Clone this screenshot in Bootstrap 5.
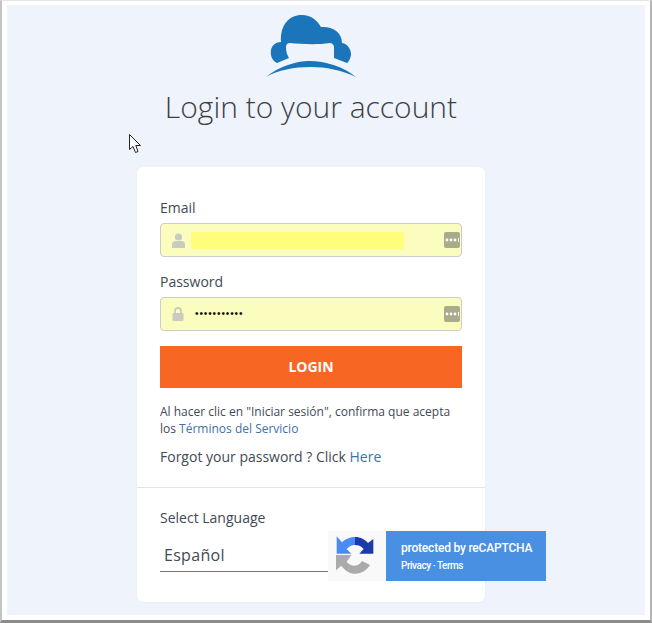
<!DOCTYPE html>
<html lang="es">
<head>
    <meta charset="UTF-8">
    <meta name="viewport" content="width=device-width, initial-scale=1.0">
    <title>Login to your account</title>
    <link href="https://cdn.jsdelivr.net/npm/bootstrap@5.3.0/dist/css/bootstrap.min.css" rel="stylesheet">
    <style>
        html, body {
            height: 100%;
            overflow: hidden;
        }

        body {
            background-color: #fff;
            font-family: "Open Sans", sans-serif;
            color: #3f4a54;
        }

        .shot-frame {
            width: 652px;
            height: 623px;
            border-style: solid;
            border-width: 1px 2px 3px 2px;
            border-color: #e6e6e6 #b4b4b4 #8c8c8c #c4c4c4;
            position: relative;
        }

        .shot-inner {
            height: 100%;
            padding: 4px 5px 5px 5px;
            background-color: #fff;
        }

        .page-area {
            height: 100%;
            background-color: #eff3fb;
            padding-top: 10px;
        }

        .login-col {
            width: 348px;
            margin-left: 130px;
        }

        .logo-wrap {
            height: 72px;
        }

        .login-title {
            font-size: 30px;
            font-weight: 300;
            line-height: 40px;
            color: #3c3f45;
            margin: 0 0 40px;
        }

        .login-box {
            height: 435px;
            border-radius: 6px;
            box-shadow: 0 0 2px rgba(0, 0, 0, .06);
        }

        .box-top {
            padding: 31px 23px 0;
        }

        .field-label {
            font-size: 14px;
            line-height: 20px;
            margin-bottom: 5px;
        }

        .field-shell {
            height: 34px;
            background-color: #fafdbd;
            border: 1px solid #cccccc;
            border-radius: 4px;
            margin-bottom: 15px;
            padding: 0 1px 0 11px;
        }

        .autofill-bar {
            width: 213px;
            height: 17px;
            margin-left: 6px;
            background-color: #fefe7c;
            border-radius: 2px;
        }

        .pw-dots {
            font-family: "Liberation Sans", sans-serif;
            font-size: 10px;
            letter-spacing: .9px;
            color: #111;
            line-height: 1;
            margin-left: 11px;
        }

        .dots-btn {
            width: 16px;
            height: 16px;
            border-radius: 2px;
            background-color: #a9ab8b;
        }

        .btn-login {
            height: 42px;
            padding: 0 0 2px;
            border-radius: 0;
            border: 0;
            background-color: #f76723;
            color: #fff;
            font-size: 14px;
            font-weight: 700;
        }

        .terms-text {
            font-size: 12px;
            line-height: 17px;
            margin: 15px 0 10px;
        }

        .forgot-text {
            font-size: 14px;
            line-height: 20px;
            margin-bottom: 20px;
        }

        .blue-link {
            color: #3e72a8;
            text-decoration: none;
        }

        .box-line {
            margin: 0;
            border-color: #e3e3e3;
            opacity: 1;
        }

        .box-bottom {
            padding: 20px 23px 0;
        }

        .lang-label {
            font-size: 14px;
            line-height: 20px;
            margin-bottom: 14px;
        }

        .lang-value {
            width: 168px;
            height: 30px;
            font-size: 16px;
            line-height: 22px;
            padding: 2px 0 0 4px;
            border-bottom: 1px solid #777;
            letter-spacing: .3px;
        }

        .recaptcha-badge {
            position: absolute;
            left: 326px;
            top: 530px;
            width: 218px;
            height: 50px;
        }

        .rc-logo {
            width: 58px;
            background-color: #f9f9f9;
            padding-left: 2px;
        }

        .rc-text {
            background-color: #4a90e2;
            color: #fff;
            font-family: Roboto, sans-serif;
            padding-left: 15px;
        }

        .rc-title {
            font-size: 12px;
            font-weight: 500;
            line-height: 14px;
            letter-spacing: -.2px;
            margin-bottom: 5px;
        }

        .rc-links {
            font-size: 10px;
            font-weight: 500;
            line-height: 12px;
            letter-spacing: -.45px;
        }

        .mouse-cursor {
            position: absolute;
            left: 127px;
            top: 133px;
        }
    </style>
</head>
<body>

    <div class="shot-frame">
        <div class="shot-inner">
            <div class="page-area">
                <div class="login-col">
                    <div class="logo-wrap d-flex justify-content-center">
                        <svg width="90" height="63" viewBox="0 0 90 63">
                            <path fill="#1b75bb" d="M11 48C6 46 4 40 5 35C6 30 10 27 15 27C14 10 23 0 36 0C45 0 51 5 55 12C65 11 76 16 76 28C82 29 85 35 85 39C85 42 83 47 81 48L68 43V32C68 30 66 28 64 28C50 30 36 29 24 28C21 28 20 30 20 32C20 36 21 40 23 43Z"/>
                            <path fill="#1b75bb" d="M0 62C12 52 30 46 43 46C60 46 78 52 90 62C75 55 60 52 45 52C28 52 12 55 0 62Z"/>
                        </svg>
                    </div>
                    <h1 class="login-title text-center">Login to your account</h1>

                    <div class="login-box bg-white">
                        <div class="box-top">
                            <div class="field-label">Email</div>
                            <div class="field-shell d-flex align-items-center">
                                <svg width="13" height="15" viewBox="0 0 13 15" class="flex-shrink-0">
                                    <circle cx="6.5" cy="4" r="3.6" fill="#c9cbc0"/>
                                    <path fill="#c9cbc0" d="M0 15V11C0 9 2 8 4 8H9C11 8 13 9 13 11V15Z"/>
                                </svg>
                                <span class="autofill-bar"></span>
                                <span class="dots-btn ms-auto d-flex align-items-center justify-content-center">
                                    <svg width="14" height="4" viewBox="0 0 14 4"><circle cx="2" cy="2" r="1.4" fill="#fff"/><circle cx="6" cy="2" r="1.4" fill="#fff"/><circle cx="10" cy="2" r="1.4" fill="#fff"/><rect x="13" y="0" width="1" height="4" fill="#fff"/></svg>
                                </span>
                            </div>

                            <div class="field-label">Password</div>
                            <div class="field-shell d-flex align-items-center">
                                <svg width="12" height="14" viewBox="0 0 12 14" class="flex-shrink-0">
                                    <path fill="none" stroke="#c9cbc0" stroke-width="1.8" d="M3 7V4C3 2.3 4.3 1 6 1C7.7 1 9 2.3 9 4V7"/>
                                    <rect x="0.5" y="6" width="11" height="8" rx="1" fill="#c9cbc0"/>
                                </svg>
                                <span class="pw-dots">•••••••••••</span>
                                <span class="dots-btn ms-auto d-flex align-items-center justify-content-center">
                                    <svg width="14" height="4" viewBox="0 0 14 4"><circle cx="2" cy="2" r="1.4" fill="#fff"/><circle cx="6" cy="2" r="1.4" fill="#fff"/><circle cx="10" cy="2" r="1.4" fill="#fff"/><rect x="13" y="0" width="1" height="4" fill="#fff"/></svg>
                                </span>
                            </div>

                            <button type="button" class="btn btn-login w-100 d-block">LOGIN</button>

                            <div class="terms-text">
                                <div>Al hacer clic en "Iniciar sesión", confirma que acepta</div>
                                <div>los <a href="#" class="blue-link">Términos del Servicio</a></div>
                            </div>
                            <p class="forgot-text">Forgot your password ? Click <a href="#" class="blue-link">Here</a></p>
                        </div>
                        <hr class="box-line">
                        <div class="box-bottom">
                            <div class="lang-label">Select Language</div>
                            <div class="lang-value">Español</div>
                        </div>
                    </div>
                </div>
            </div>
        </div>

        <div class="recaptcha-badge d-flex">
            <div class="rc-logo d-flex align-items-center">
                <svg width="50" height="50" viewBox="0 0 150 150">
                    <path fill="#4a8af4" d="M75 18C60 18 46 24 36 34L20 16V68H64L50 54C56 47 65 42 75 42Z"/>
                    <path fill="#1c3aa9" d="M75 18C92 18 106 26 114 36L130 24V68H88L101 54C96 47 86 42 75 42Z"/>
                    <path fill="#ababab" d="M18 72V118L34 104C46 120 60 128 75 128C95 128 110 118 120 102L96 90C90 99 83 104 75 104C65 104 56 100 50 92L64 72Z"/>
                </svg>
            </div>
            <div class="rc-text flex-grow-1 d-flex flex-column justify-content-center">
                <div class="rc-title">protected by reCAPTCHA</div>
                <div class="rc-links">Privacy · Terms</div>
            </div>
        </div>

        <svg class="mouse-cursor" width="13" height="20" viewBox="0 0 13 20">
            <path fill="#fff" stroke="#222" stroke-width="1" d="M.5.5V15.5L4 12.5L6.5 18.5L9 17.5L6.8 11.5H11.5Z"/>
        </svg>
    </div>

    <script src="https://cdn.jsdelivr.net/npm/bootstrap@5.3.0/dist/js/bootstrap.bundle.min.js"></script>
</body>
</html>
